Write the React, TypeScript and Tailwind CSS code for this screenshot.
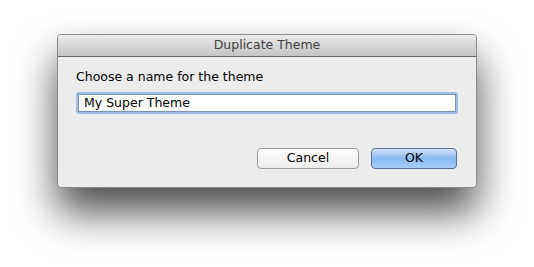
export default function App() {
  return (
    <div className="w-[534px] h-[267px] bg-white relative" style={{ fontFamily: '"DejaVu Sans", "Liberation Sans", sans-serif' }}>
      <div className="absolute left-[57px] top-[34px] w-[420px] h-[154px] rounded-[4px] border border-[#8a8a8a] bg-[#ececec] overflow-hidden flex flex-col shadow-[0_24px_40px_rgba(0,0,0,0.7)]">
        <div className="h-[22px] shrink-0 border-b border-[#666] bg-gradient-to-b from-[#ebebeb] to-[#c4c4c4] flex items-center justify-center text-[12.5px] text-[#404040]">
          Duplicate Theme
        </div>
        <div className="flex flex-col pl-[18px] pr-[18px]">
          <div className="mt-[11px] text-[12.5px] text-black leading-[17px]">Choose a name for the theme</div>
          <div className="mt-[7px] h-[22px] rounded-[3px] bg-[#9dbde6] p-[2px]">
            <div className="h-full bg-white border border-[#7d93b3] flex items-center pl-[5px] text-[12.5px] text-black">
              My Super Theme
            </div>
          </div>
          <div className="mt-[34px] flex justify-end gap-[12px] pr-[1px]">
            <div className="w-[102px] h-[21px] rounded-[4px] border border-[#9a9a9a] bg-gradient-to-b from-white to-[#ececec] flex items-center justify-center text-[12.5px] text-black">
              Cancel
            </div>
            <div className="w-[86px] h-[21px] rounded-[4px] border border-[#5a6f9a] bg-gradient-to-b from-[#cfe2fb] via-[#8bb9f3] to-[#a6cdf8] flex items-center justify-center text-[12.5px] text-black">
              OK
            </div>
          </div>
        </div>
      </div>
    </div>
  );
}
